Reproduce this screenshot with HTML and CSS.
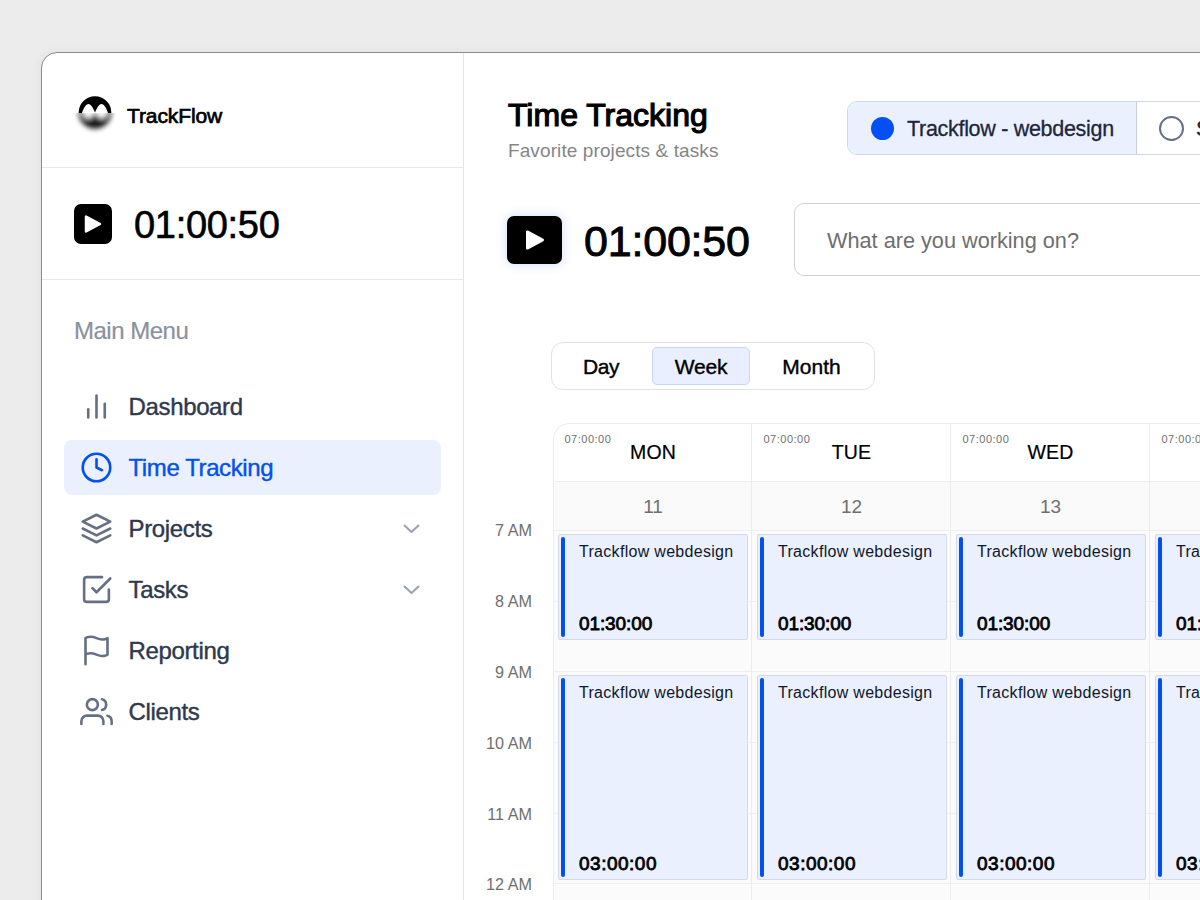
FILE: index.html
```
<!DOCTYPE html>
<html lang="en">
<head>
    <meta charset="UTF-8">
    <meta name="viewport" content="width=device-width, initial-scale=1.0">
    <title>TrackFlow - Time Tracking</title>
    <link rel="stylesheet" href="styles.css">
</head>
<body>

    <div class="window">
        <aside class="sidebar">
            <div class="brand">
                <svg class="logo" viewBox="0 0 44 44">
                    <defs>
                        <filter id="soft" x="-40%" y="-60%" width="180%" height="220%"><feGaussianBlur stdDeviation="2.7"/></filter>
                        <clipPath id="top-half"><rect x="0" y="0" width="44" height="22"/></clipPath>
                        <clipPath id="bottom-half"><rect x="0" y="22" width="44" height="22"/></clipPath>
                    </defs>
                    <g clip-path="url(#top-half)">
                        <circle cx="22" cy="21.5" r="16.3"/>
                        <path d="M9 22C10.500 17 13 13 15.500 13S20 17 22 21.500C24 17 26 13 28.500 13S33.500 17 35 22Z" fill="#fff"/>
                    </g>
                    <g clip-path="url(#bottom-half)">
                        <g filter="url(#soft)">
                            <circle cx="22" cy="21.5" r="16.3" opacity="0.9"/>
                            <path d="M9.500 22C11 25.500 13 27 15.500 27S20 25 22 20C24 25 26 27 28.500 27S33 25.500 34.500 22V17H9.500Z" fill="#fff"/>
                        </g>
                    </g>
                </svg>
                <span class="brand-name">TrackFlow</span>
            </div>

            <div class="side-timer">
                <button class="play play-small" aria-label="Start timer">
                    <svg viewBox="0 0 20 22"><path d="M3 3.500v15L17 11z"/></svg>
                </button>
                <span class="side-time">01:00:50</span>
            </div>

            <nav class="menu">
                <h2 class="menu-title">Main Menu</h2>
                <a class="menu-item">
                    <svg class="icon" viewBox="0 0 24 24"><path d="M6 20v-6M12 20V4M18 20V10"/></svg>
                    <span>Dashboard</span>
                </a>
                <a class="menu-item active">
                    <svg class="icon" viewBox="0 0 24 24"><circle cx="12" cy="12" r="10"/><path d="M12 6v6l4 2"/></svg>
                    <span>Time Tracking</span>
                </a>
                <a class="menu-item">
                    <svg class="icon" viewBox="0 0 24 24"><path d="M12 2L2 7l10 5 10-5zM2 17l10 5 10-5M2 12l10 5 10-5"/></svg>
                    <span>Projects</span>
                    <svg class="chevron" viewBox="0 0 16 10"><path d="M1 1.500l7 6.500 7-6.500"/></svg>
                </a>
                <a class="menu-item">
                    <svg class="icon" viewBox="0 0 24 24"><path d="M9 11l3 3L22 4"/><path d="M21 12v7a2 2 0 0 1-2 2H5a2 2 0 0 1-2-2V5a2 2 0 0 1 2-2h11"/></svg>
                    <span>Tasks</span>
                    <svg class="chevron" viewBox="0 0 16 10"><path d="M1 1.500l7 6.500 7-6.500"/></svg>
                </a>
                <a class="menu-item">
                    <svg class="icon" viewBox="0 0 24 24"><path d="M4 15s1-1 4-1 5 2 8 2 4-1 4-1V3s-1 1-4 1-5-2-8-2-4 1-4 1zM4 22v-7"/></svg>
                    <span>Reporting</span>
                </a>
                <a class="menu-item">
                    <svg class="icon" viewBox="0 0 24 24"><path d="M17 21v-2a4 4 0 0 0-4-4H5a4 4 0 0 0-4 4v2"/><circle cx="9" cy="7" r="4"/><path d="M23 21v-2a4 4 0 0 0-3-3.870M16 3.130a4 4 0 0 1 0 7.750"/></svg>
                    <span>Clients</span>
                </a>
            </nav>
        </aside>

        <main class="content">
            <header class="page-header">
                <div class="heading">
                    <h1>Time Tracking</h1>
                    <p>Favorite projects &amp; tasks</p>
                </div>
                <div class="projects">
                    <div class="project selected"><span class="dot"></span><span>Trackflow - webdesign</span></div>
                    <div class="project"><span class="ring"></span><span>Saas design</span></div>
                </div>
            </header>

            <section class="tracker">
                <button class="play play-large" aria-label="Start timer">
                    <svg viewBox="0 0 20 22"><path d="M3 3.500v15L17 11z"/></svg>
                </button>
                <span class="main-time">01:00:50</span>
                <input class="task-input" type="text" placeholder="What are you working on?">
            </section>

            <div class="range">
                <span class="range-day">Day</span>
                <span class="range-week">Week</span>
                <span class="range-month">Month</span>
            </div>

            <section class="calendar">
                <div class="hours">
                    <span>7 AM</span>
                    <span>8 AM</span>
                    <span>9 AM</span>
                    <span>10 AM</span>
                    <span>11 AM</span>
                    <span>12 AM</span>
                </div>
                <div class="days">
                    <div class="day">
                        <div class="day-name"><small>07:00:00</small>MON</div>
                        <div class="day-number">11</div>
                        <div class="slots">
                            <div class="event"><p>Trackflow webdesign</p><b>01:30:00</b></div>
                            <div class="event long"><p>Trackflow webdesign</p><b>03:00:00</b></div>
                        </div>
                    </div>
                    <div class="day">
                        <div class="day-name"><small>07:00:00</small>TUE</div>
                        <div class="day-number">12</div>
                        <div class="slots">
                            <div class="event"><p>Trackflow webdesign</p><b>01:30:00</b></div>
                            <div class="event long"><p>Trackflow webdesign</p><b>03:00:00</b></div>
                        </div>
                    </div>
                    <div class="day">
                        <div class="day-name"><small>07:00:00</small>WED</div>
                        <div class="day-number">13</div>
                        <div class="slots">
                            <div class="event"><p>Trackflow webdesign</p><b>01:30:00</b></div>
                            <div class="event long"><p>Trackflow webdesign</p><b>03:00:00</b></div>
                        </div>
                    </div>
                    <div class="day">
                        <div class="day-name"><small>07:00:00</small>THU</div>
                        <div class="day-number">14</div>
                        <div class="slots">
                            <div class="event"><p>Trackflow webdesign</p><b>01:30:00</b></div>
                            <div class="event long"><p>Trackflow webdesign</p><b>03:00:00</b></div>
                        </div>
                    </div>
                </div>
            </section>
        </main>
    </div>

</body>
</html>
```
FILE: styles.css
```
* { box-sizing: border-box; }
body { margin: 0; height: 900px; overflow: hidden; background: #ececec; font-family: "Liberation Sans", Arial, sans-serif; color: #000; }
h1, h2, p { margin: 0; font-weight: 400; }

/* App window, runs off the right and bottom edges */
.window { display: flex; width: 1400px; height: 1000px; margin: 52px 0 0 41px; background: #fff; border: 1px solid #8b8b8b; border-radius: 16px; overflow: hidden; box-shadow: 0 0 12px rgba(0, 0, 0, 0.05); }

/* Sidebar */
.sidebar { flex: none; width: 422px; border-right: 1px solid #e4e7ea; }
.brand { display: flex; align-items: center; height: 115px; padding: 5px 0 0 31px; border-bottom: 1px solid #e4e9ec; }
.logo { width: 44px; height: 44px; margin-right: 10px; }
.brand-name { padding-top: 7px; font-size: 21px; letter-spacing: -0.1px; -webkit-text-stroke: 0.7px #000; }
.side-timer { display: flex; align-items: center; gap: 22px; height: 112px; padding-left: 32px; border-bottom: 1px solid #e4e9ec; }
.play { display: flex; align-items: center; justify-content: center; flex: none; padding: 0; border: 0; border-radius: 7px; background: #000; }
.play svg { width: 20px; height: 22px; fill: #fff; stroke: #fff; stroke-width: 2.500; stroke-linejoin: round; }
.play-small { width: 38px; height: 40px; }
.side-time { padding-top: 4px; font-size: 38px; letter-spacing: -0.3px; -webkit-text-stroke: 0.6px #000; }

.menu { padding: 35px 22px 0; }
.menu-title { height: 30px; padding-left: 10px; margin-bottom: 34px; font-size: 24px; line-height: 31px; letter-spacing: -0.5px; color: #8a929e; -webkit-text-stroke: 0.2px #8a929e; }
.menu-item { display: flex; align-items: center; height: 55px; margin-bottom: 6px; padding: 0 21px 0 15.500px; border-radius: 8px; font-size: 24px; letter-spacing: -0.35px; color: #2f394b; -webkit-text-stroke: 0.4px currentColor; }
.menu-item span { padding-top: 1px; }
.menu-item.active { background: #eaf0fe; color: #0450ed; letter-spacing: -0.4px; }
.icon { width: 33px; height: 33px; margin-right: 16px; fill: none; stroke: #667085; stroke-width: 1.900; stroke-linecap: round; stroke-linejoin: round; }
.active .icon { stroke: #0450ed; }
.chevron { width: 17px; height: 10px; margin-left: auto; fill: none; stroke: #98a2b3; stroke-width: 2; stroke-linecap: round; stroke-linejoin: round; }

/* Page header */
.content { flex: 1; padding: 48px 0 0 43px; }
.page-header { display: flex; align-items: flex-start; height: 102px; }
.heading { width: 340px; padding-left: 1px; }
.heading h1 { height: 39px; margin-top: -5px; font-size: 32px; line-height: 38px; -webkit-text-stroke: 1.2px #000; }
.heading p { font-size: 19px; line-height: 32px; letter-spacing: 0.1px; color: #858585; }
.projects { display: flex; flex: 1; height: 54px; border: 1px solid #d0d7e2; border-radius: 10px; overflow: hidden; }
.project { display: flex; align-items: center; flex: none; padding-left: 22px; font-size: 21.500px; letter-spacing: -0.3px; color: #1d2639; -webkit-text-stroke: 0.3px currentColor; }
.project.selected { width: 289px; padding-left: 23px; background: #eaf0fe; border-right: 1px solid #c9d1de; }
.project span:last-child { padding-top: 2px; }
.dot { width: 23px; height: 23px; margin-right: 13px; border-radius: 50%; background: #0450f5; }
.ring { width: 25px; height: 25px; margin-right: 12px; border: 2px solid #667085; border-radius: 50%; }

.tracker { display: flex; align-items: center; height: 73px; }
.play-large { width: 55px; height: 48px; margin-right: 22px; box-shadow: 0 0 12px rgba(4, 80, 245, 0.2); }
.play-large svg { width: 22px; height: 24px; }
.main-time { width: 210px; padding-top: 3px; font-size: 43px; letter-spacing: -0.2px; -webkit-text-stroke: 0.9px #000; }
.task-input { flex: 1; height: 73px; padding: 3px 32px 0; border: 1px solid #d2d2d2; border-radius: 10px; font: 21.700px "Liberation Sans", Arial, sans-serif; outline: none; }
.task-input::placeholder { color: #6e6e6e; opacity: 1; }

/* Day / week / month switch */
.range { display: flex; align-items: center; width: 324px; height: 48px; margin: 66px 0 0 44px; border: 1px solid #e2e2e2; border-radius: 12px; font-size: 21px; line-height: 37px; text-align: center; -webkit-text-stroke: 0.4px #000; }
.range-day { width: 98px; letter-spacing: -0.4px; }
.range-week { width: 98px; height: 38px; margin-left: 2px; background: #e9effe; border: 1px solid #c8d6f8; border-radius: 5px; letter-spacing: -0.2px; }
.range-month { width: 123px; }

/* Week grid */
.calendar { display: flex; margin-top: 33px; }
.hours { display: flex; flex-direction: column; width: 46px; padding: 95px 21px 0 0; align-items: flex-end; white-space: nowrap; }
.hours span { height: 70.900px; font-size: 16.200px; line-height: 24px; color: #6f6f6f; }
.days { display: flex; flex: none; border: 1px solid #ececec; border-radius: 16px 0 0 0; overflow: hidden; }
.day { flex: none; width: 199px; border-right: 1px solid #ececec; }
.day:first-child { width: 198px; }
.day-name { position: relative; height: 57px; padding-left: 1px; font-size: 19.500px; line-height: 57px; letter-spacing: 0.2px; text-align: center; -webkit-text-stroke: 0.2px #000; }
.day-name small { position: absolute; top: 7px; left: 11.500px; font-size: 11px; line-height: 16px; letter-spacing: 0.5px; color: #6f6f6f; -webkit-text-stroke: 0; }
.day:first-child small { left: 10.500px; }
.day-number { height: 49px; padding-left: 1px; border-top: 1px solid #ececec; background: #fafafa; font-size: 19px; line-height: 50px; text-align: center; color: #6f6f6f; }
.slots { height: 460px; padding: 4px 3px 4px 5px; background: repeating-linear-gradient(#efefef 0, #efefef 1px, #fbfbfb 1px, #fbfbfb 70.700px); }
.day:first-child .slots { padding-left: 4px; }
.event { position: relative; display: flex; flex-direction: column; justify-content: space-between; height: 106px; margin-bottom: 35px; padding: 7px 0 5px 20px; background: #eaf0fe; border: 1px solid #d5dbe6; border-radius: 2px; white-space: nowrap; }
.event::before { content: ""; position: absolute; left: 2px; top: 2px; bottom: 2px; width: 4px; border-radius: 2px; background: #0450ed; }
.event.long { height: 205px; }
.event p { font-size: 16px; line-height: 19px; letter-spacing: 0.3px; color: #10172a; }
.event b { font-size: 19px; line-height: 21px; font-weight: 400; letter-spacing: -0.1px; -webkit-text-stroke: 0.8px #000; }
.event.long b { letter-spacing: 0.5px; }
```
